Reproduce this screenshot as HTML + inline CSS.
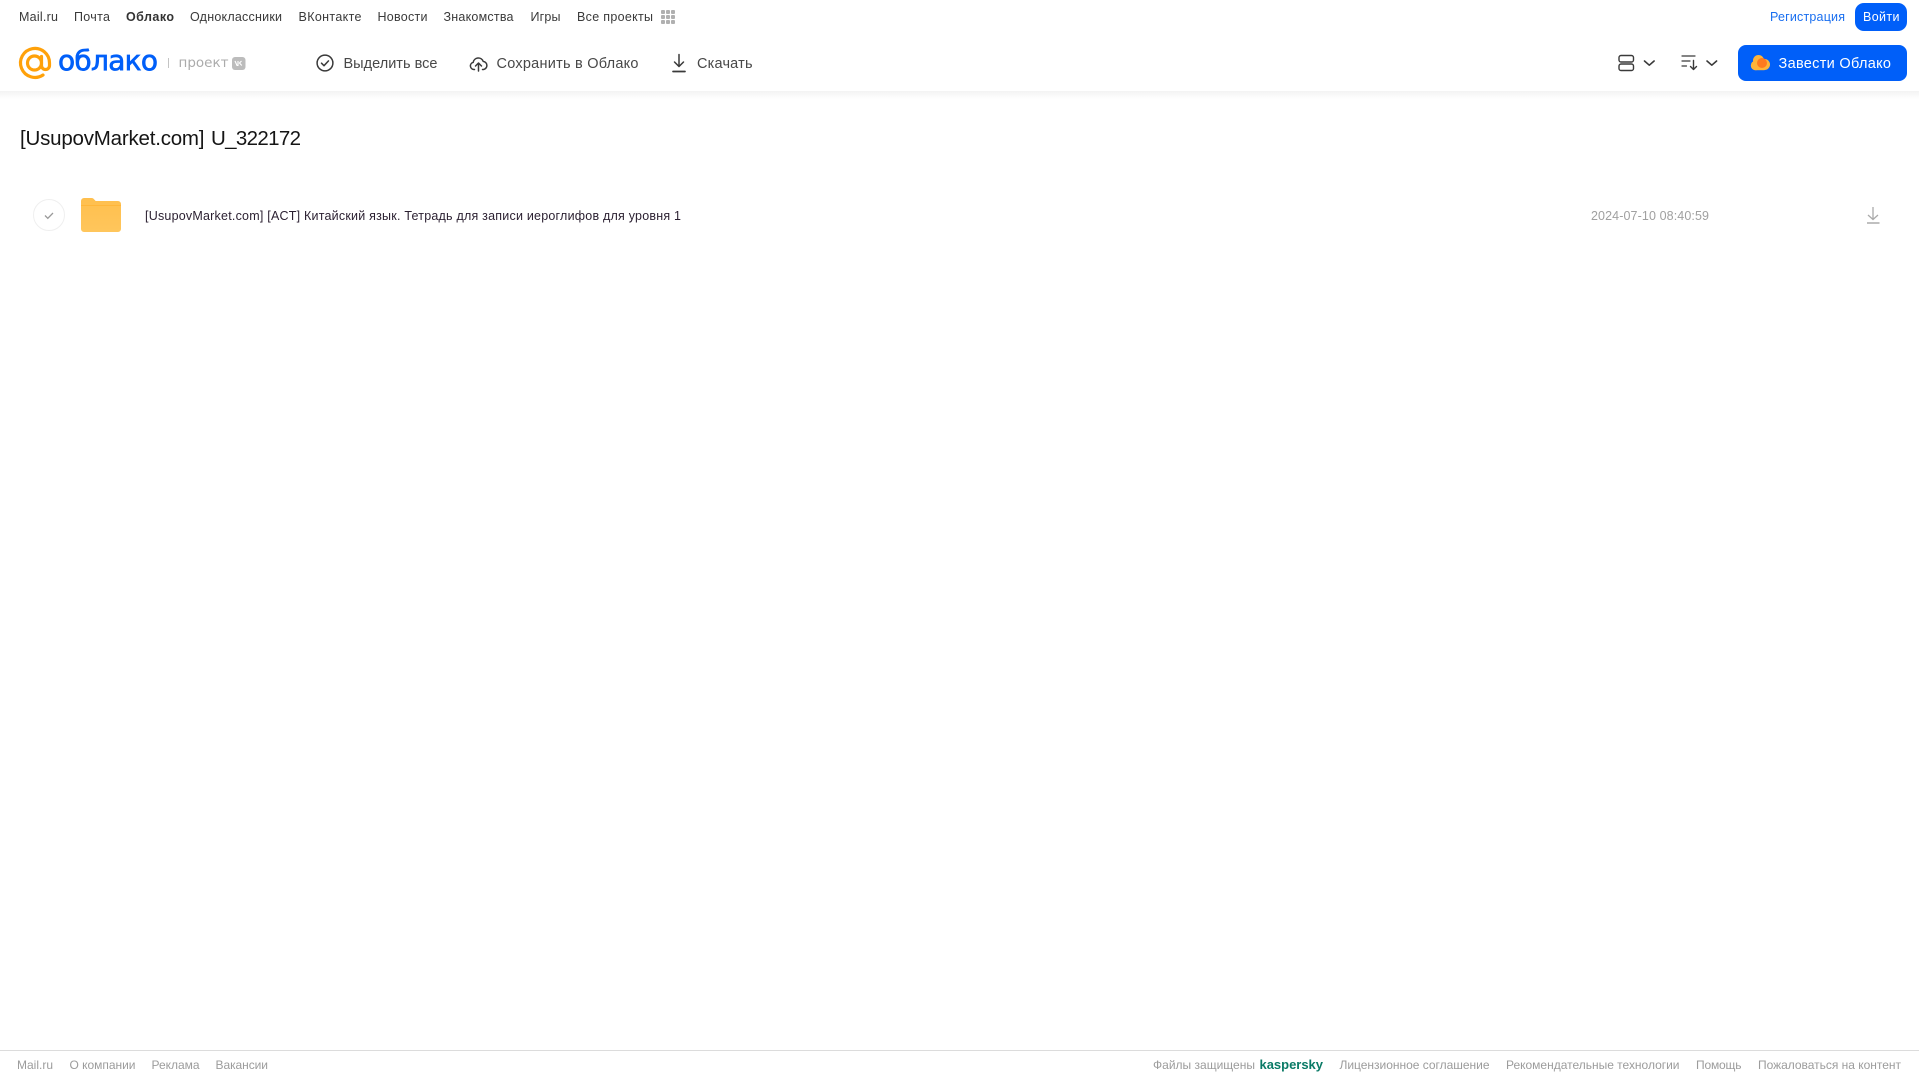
<!DOCTYPE html>
<html lang="ru">
<head>
<meta charset="utf-8">
<title>[UsupovMarket.com] U_322172</title>
<style>
html,body{margin:0;padding:0;width:1919px;height:1079px;overflow:hidden;background:#fff}
svg{display:block;position:absolute;left:0;top:0}
text{font-family:"Liberation Sans",Arial,sans-serif;white-space:pre}
.n{font-size:12.500px;fill:#3a3a3a}
.a{font-size:14.500px;fill:#484848}
.f{font-size:12px;fill:#9c9c9c}
</style>
</head>
<body>
<svg width="1919" height="1079" viewBox="0 0 1919 1079" xmlns="http://www.w3.org/2000/svg">
<defs>
<linearGradient id="sh" x1="0" y1="0" x2="0" y2="1"><stop offset="0" stop-color="#f3f3f3"/><stop offset="1" stop-color="#ffffff"/></linearGradient>
<linearGradient id="fo" x1="0" y1="0" x2="0" y2="1"><stop offset="0" stop-color="#ffbf4d"/><stop offset="1" stop-color="#ffc65c"/></linearGradient>
</defs>
<rect x="0" y="91" width="1919" height="8" fill="url(#sh)"/>

<!-- top nav -->
<text class="n" x="19" y="21" textLength="39">Mail.ru</text>
<text class="n" x="74" y="21" textLength="36">Почта</text>
<text class="n" x="126" y="21" textLength="48" font-weight="700" style="fill:#333">Облако</text>
<text class="n" x="190" y="21" textLength="92">Одноклассники</text>
<text class="n" x="298.500" y="21" textLength="63">ВКонтакте</text>
<text class="n" x="377.500" y="21" textLength="50">Новости</text>
<text class="n" x="443.500" y="21" textLength="70">Знакомства</text>
<text class="n" x="530.500" y="21" textLength="30">Игры</text>
<text class="n" x="577" y="21" textLength="76">Все проекты</text>
<g fill="#b0b0b0">
<rect x="661" y="10" width="4" height="4" rx="1"/><rect x="666" y="10" width="4" height="4" rx="1"/><rect x="671" y="10" width="4" height="4" rx="1"/>
<rect x="661" y="15" width="4" height="4" rx="1"/><rect x="666" y="15" width="4" height="4" rx="1"/><rect x="671" y="15" width="4" height="4" rx="1"/>
<rect x="661" y="20" width="4" height="4" rx="1"/><rect x="666" y="20" width="4" height="4" rx="1"/><rect x="671" y="20" width="4" height="4" rx="1"/>
</g>
<text class="n" x="1770" y="21" textLength="75" style="fill:#1a6ff0">Регистрация</text>
<rect x="1855" y="3" width="52" height="28" rx="9" fill="#005ff9"/>
<text class="n" x="1863" y="21" textLength="36.500" style="fill:#fff">Войти</text>

<!-- logo -->
<g fill="none" stroke="#ffa10a" stroke-linecap="round">
<circle cx="34.500" cy="63" r="7" stroke-width="3.200"/>
<path d="M41.500 56.500V65.500a4 4 0 0 0 8 0V63A14.500 14.500 0 1 0 43 75" stroke-width="3.200"/>
</g>
<text x="58" y="70" textLength="100" font-size="28" style="font-family:'DejaVu Sans',sans-serif;fill:#005ff9;stroke:#005ff9;stroke-width:.7">облако</text>
<rect x="168" y="58" width="1" height="10" fill="#c4c4c4"/>
<text x="178.500" y="67" textLength="50" font-size="13.500" style="font-family:'DejaVu Sans',sans-serif;fill:#ababab">проект</text>
<rect x="232" y="57" width="13.500" height="13" rx="3" fill="#bcbcbc"/>
<path d="M235 61l2 4.500h1V61m3.500 0l-2 2 2.300 2.500" fill="none" stroke="#fff" stroke-width="1.100"/>

<!-- toolbar -->
<g fill="none" stroke="#3a3a3a" stroke-width="1.500" stroke-linecap="round" stroke-linejoin="round">
<circle cx="325" cy="63" r="7.900"/>
<path d="M321.500 63.200l2.500 2.500 4.500-4.800"/>
<path d="M474.500 69.500H473.800a3.600 3.600 0 0 1-.6-7.100 5.200 5.200 0 0 1 10-1 4.100 4.100 0 0 1 .4 8.100H482.500"/>
<path d="M478.500 71V63M475.500 66l3-3 3 3"/>
<path d="M679 54.500V66.500M674.500 62l4.500 4.500 4.500-4.500"/>
<path d="M673 71.500h12" stroke-width="1.700"/>
</g>
<text class="a" x="343.500" y="68" textLength="94">Выделить все</text>
<text class="a" x="496.500" y="68" textLength="142">Сохранить в Облако</text>
<text class="a" x="697" y="68" textLength="55.500">Скачать</text>

<!-- right controls -->
<g fill="none" stroke="#3a3a3a" stroke-width="1.400" stroke-linecap="round" stroke-linejoin="round">
<rect x="1619" y="55.500" width="14.500" height="6.500" rx="2"/>
<rect x="1619" y="64" width="14.500" height="6.500" rx="2"/>
<path d="M1644.500 61l4.800 4.200 4.800-4.200" stroke-width="1.600"/>
<path d="M1682 56h13M1682 61h8M1682 66h4.500" stroke-width="1.200"/>
<path d="M1693.500 60.500V69.500M1690.500 66.500l3 3 3-3"/>
<path d="M1707 61l4.800 4.200 4.800-4.200" stroke-width="1.600"/>
</g>
<rect x="1738" y="45" width="169" height="36" rx="8" fill="#005ff9"/>
<g fill="#ffb43a">
<circle cx="1758.500" cy="60.500" r="5.500"/>
<circle cx="1755.500" cy="65.500" r="4.700"/>
<circle cx="1764.500" cy="64.500" r="5.500"/>
<rect x="1755.500" y="62" width="9" height="8.200"/>
</g>
<circle cx="1762" cy="63" r="5" fill="#ff7a1f"/>
<text class="a" x="1778.500" y="68" textLength="112.500" style="fill:#fff">Завести Облако</text>

<!-- title -->
<text x="20" y="145" textLength="184.500" font-size="20.500" fill="#151515">[UsupovMarket.com]</text>
<text x="211" y="145" textLength="90" font-size="20.500" fill="#151515">U_322172</text>

<!-- row -->
<circle cx="49" cy="215" r="15.500" fill="#fff" stroke="#efefef" stroke-width="1"/>
<path d="M45 215.500l2.800 2.800 5.200-5.300" fill="none" stroke="#9a9a9a" stroke-width="1.300"/>
<path d="M81 201a3 3 0 0 1 3-3h7.500c1.500 0 2.200.8 3 1.800l1.200 1.200H118a3 3 0 0 1 3 3v25a3 3 0 0 1-3 3H84a3 3 0 0 1-3-3z" fill="url(#fo)"/>
<rect x="81" y="205" width="40" height="1" fill="#ffb63a"/>
<text x="145" y="220" textLength="536" font-size="12.500" fill="#2a1f30">[UsupovMarket.com] [ACT] Китайский язык. Тетрадь для записи иероглифов для уровня 1</text>
<text x="1591" y="220" textLength="118" font-size="12.500" fill="#a0a0a0">2024-07-10 08:40:59</text>
<g fill="none" stroke="#aaa" stroke-width="1.300">
<path d="M1873 207V219.500M1868 215l5 4.500 5-4.500"/>
<path d="M1867 223h12.500" stroke-width="1.500"/>
</g>

<!-- footer -->
<rect x="0" y="1050" width="1919" height="1" fill="#dcdcdc"/>
<text class="f" x="17" y="1069" textLength="36">Mail.ru</text>
<text class="f" x="69.500" y="1069" textLength="66">О компании</text>
<text class="f" x="151.500" y="1069" textLength="48">Реклама</text>
<text class="f" x="215.500" y="1069" textLength="52.500">Вакансии</text>
<text class="f" x="1153" y="1069" textLength="102">Файлы защищены</text>
<text x="1259.500" y="1069" textLength="63.500" font-size="13" font-weight="700" fill="#0a7a66">kaspersky</text>
<text class="f" x="1339.500" y="1069" textLength="150">Лицензионное соглашение</text>
<text class="f" x="1506" y="1069" textLength="173.500">Рекомендательные технологии</text>
<text class="f" x="1696" y="1069" textLength="45.500">Помощь</text>
<text class="f" x="1758" y="1069" textLength="143">Пожаловаться на контент</text>
</svg>
</body>
</html>
